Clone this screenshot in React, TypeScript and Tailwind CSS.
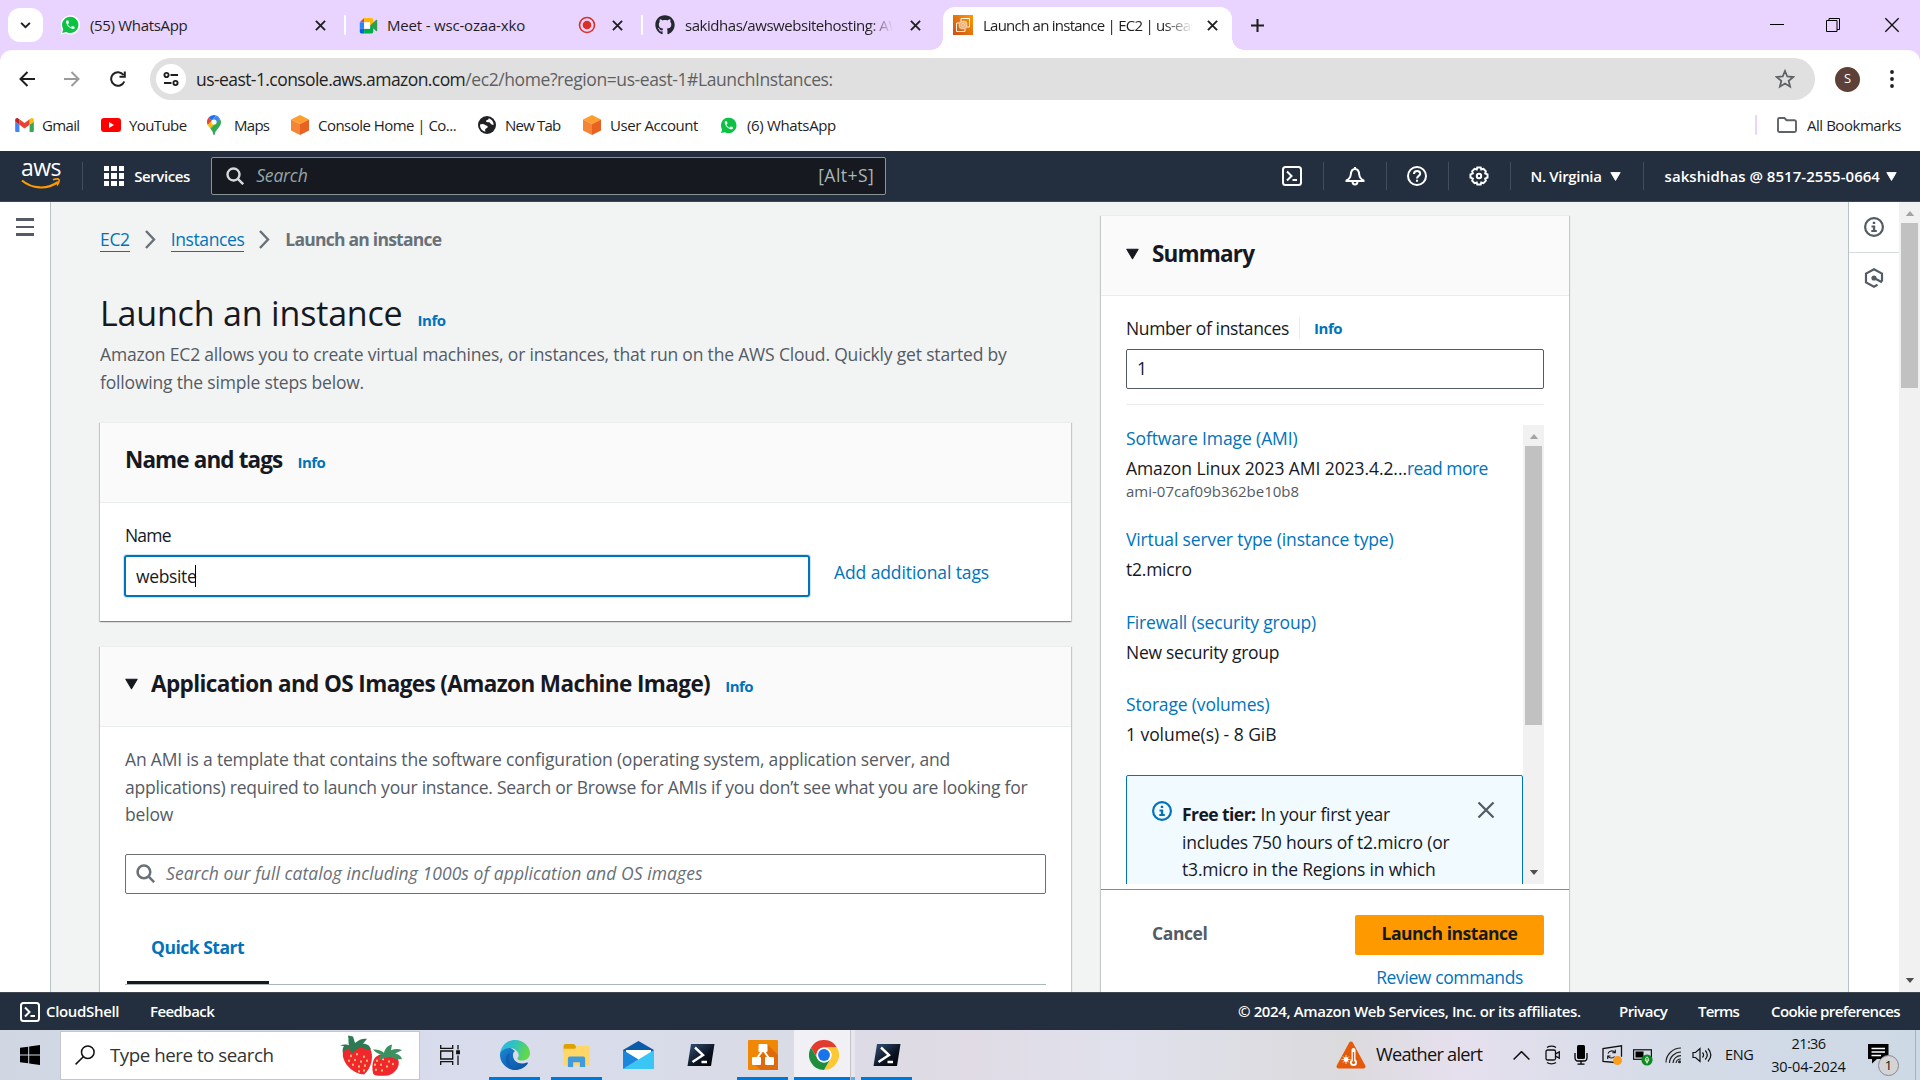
import type { ReactNode } from "react";
import { FaGithub } from "react-icons/fa";

/* ---------- small drawings ---------- */

const PHONE =
  "M6.62 10.79c1.44 2.83 3.76 5.14 6.59 6.59l2.2-2.2c.27-.27.67-.36 1.02-.24 1.12.37 2.33.57 3.57.57.55 0 1 .45 1 1V20c0 .55-.45 1-1 1-9.39 0-17-7.61-17-17 0-.55.45-1 1-1h3.5c.55 0 1 .45 1 1 0 1.25.2 2.45.57 3.57.11.35.03.74-.25 1.02l-2.2 2.2z";

function WhatsApp({ className = "" }: { className?: string }) {
  return (
    <svg viewBox="0 0 24 24" className={className}>
      <path d="M0.6 23.6 2.4 17.6A11.6 11.6 0 1 1 6.8 22Z" fill="#fff" />
      <path d="M2.6 21.6 3.9 17A9.8 9.8 0 1 1 7.4 20.4Z" fill="#0cc143" />
      <g transform="translate(5.6 5) scale(.56)">
        <path d={PHONE} fill="#fff" />
      </g>
    </svg>
  );
}

function MeetLogo({ className = "" }: { className?: string }) {
  return (
    <svg viewBox="0 0 24 24" className={className}>
      <path d="M6.5 2.5V8H1z" fill="#ea4335" />
      <path d="M1 8h5.5v8H1z" fill="#2684fc" />
      <path d="M1 16h5.5v6H3a2 2 0 0 1-2-2z" fill="#0066da" />
      <path d="M6.5 2.5H16a2 2 0 0 1 2 2V12h-4V8H6.5z" fill="#ffba00" />
      <path d="M6.500 16H14v-4h4v8a2 2 0 0 1-2 2H6.500z" fill="#00ac47" />
      <path d="M14 12l7.500-7c.6-.5 1.500-.1 1.500.7v12.600c0 .8-.9 1.200-1.500.7z" fill="#2d9d4e" />
      <path d="M6.500 8H14v8H6.500z" fill="#fff" />
    </svg>
  );
}

function Ec2Logo({ className = "" }: { className?: string }) {
  return (
    <svg viewBox="0 0 20 20" className={className}>
      <defs>
        <linearGradient id="ec2" x1="0" y1="1" x2="1" y2="0">
          <stop offset="0" stopColor="#c8511b" />
          <stop offset="1" stopColor="#f90" />
        </linearGradient>
      </defs>
      <rect width="20" height="20" fill="url(#ec2)" />
      <g fill="none" stroke="#fff" strokeWidth=".9">
        <path d="M8 6V3.500h8.500V12H14M6 8H3.500v8.500H12V14" />
        <rect x="7" y="7" width="6" height="6" />
        <rect x="8.800" y="8.800" width="2.400" height="2.400" />
        <path d="M9 5.500V7M11 5.500V7M9 13v1.500M11 13v1.500M5.500 9H7M5.500 11H7M13 9h1.500M13 11h1.500" strokeWidth=".6" />
      </g>
    </svg>
  );
}

function Cube() {
  return (
    <svg viewBox="0 0 18 20" className="h-5 w-[18px]">
      <path d="M9 0l9 4.500L9 9 0 4.500z" fill="#ff9d2e" />
      <path d="M0 4.500L9 9v11l-9-4.500z" fill="#f58536" />
      <path d="M18 4.500L9 9v11l9-4.500z" fill="#e86222" />
    </svg>
  );
}

function Gmail() {
  return (
    <svg viewBox="0 3 24 18" className="h-[14px] w-[19px]">
      <path fill="#4285f4" d="M1.636 21h3.819v-9.270L0 7.640v11.730C0 20.270.732 21 1.636 21z" />
      <path fill="#34a853" d="M18.545 21h3.819A1.636 1.636 0 0 0 24 19.366V7.640l-5.455 4.090z" />
      <path fill="#fbbc04" d="M18.545 4.640v7.090L24 7.640V5.457c0-2.023-2.309-3.178-3.927-1.964z" />
      <path fill="#ea4335" d="M5.455 11.730V4.640L12 9.548l6.545-4.910v7.091L12 16.640z" />
      <path fill="#c5221f" d="M0 5.457V7.640l5.455 4.090V4.640L3.927 3.493C2.309 2.280 0 3.434 0 5.457z" />
    </svg>
  );
}

function YouTube() {
  return (
    <svg viewBox="0 0 20 14" className="h-[14px] w-5">
      <rect width="20" height="14" rx="3" fill="#f00" />
      <path d="M8 4l5 3-5 3z" fill="#fff" />
    </svg>
  );
}

function MapsPin() {
  return (
    <svg viewBox="0 0 14 20" className="h-5 w-[14px]">
      <path d="M7 0a7 7 0 0 0-5.400 2.500L5 5.400 9.200.400A7 7 0 0 0 7 0z" fill="#1a73e8" />
      <path d="M1.600 2.500A7 7 0 0 0 .7 9.900L5 5.400z" fill="#ea4335" />
      <path d="M9.200.4 5 5.400l4 3.300 4-4.800A7 7 0 0 0 9.200.4z" fill="#4285f4" />
      <path d="M.7 9.900c.6 1.300 1.600 2.400 2.600 3.700L9 8.700 5 5.400z" fill="#fbbc04" />
      <path d="M13 3.900 3.300 13.600C4.900 15.700 6 17 6.200 19.200c.1 1 1.500 1 1.600 0C8.300 14.500 14 12.500 14 7c0-1.100-.4-2.200-1-3.100z" fill="#34a853" />
      <circle cx="7" cy="7" r="2.600" fill="#fff" />
    </svg>
  );
}

function Globe() {
  return (
    <svg viewBox="0 0 18 18" className="h-[18px] w-[18px]">
      <circle cx="9" cy="9" r="9" fill="#202124" />
      <path d="M2 8.500C4 7.500 6 7.800 7.500 9.200c1.500.2 2.500.8 2.200 2-.4 1-2 1-2.500 2-.2.800.2 2 .2 2.600A7.200 7.200 0 0 1 2 8.500zM9.500 2c1 .2 1.500.6 1 1.300S8 4.200 8 5.200s1.600.8 3 1 1.500 1.800 2.600 2.300 1.700.4 2.200.2A7 7 0 0 0 9.500 2z" fill="#fff" />
    </svg>
  );
}

function Cross({ className = "", w = 2 }: { className?: string; w?: number }) {
  return (
    <svg viewBox="0 0 12 12" className={className} fill="none" stroke="currentColor" strokeWidth={w}>
      <path d="M1 1l10 10M11 1L1 11" />
    </svg>
  );
}

function Down({ className = "" }: { className?: string }) {
  return (
    <svg viewBox="0 0 12 10" className={className}>
      <path d="M.8.6h10.400L6 9.400z" fill="currentColor" stroke="currentColor" strokeLinejoin="round" />
    </svg>
  );
}

function Magnifier({ className = "" }: { className?: string }) {
  return (
    <svg viewBox="0 0 18 18" className={className} fill="none" stroke="currentColor" strokeWidth="2.400">
      <circle cx="7.500" cy="7.500" r="6" />
      <path d="M11.800 11.800l5.400 5.400" />
    </svg>
  );
}

function Shell() {
  return (
    <svg viewBox="0 0 20 20" className="h-5 w-5 shrink-0" fill="none" stroke="#fff" strokeWidth="2">
      <rect x="1" y="1" width="18" height="18" rx="2.500" />
      <path d="M5 5.500 9.500 10 5 14.500M10.500 14H15" />
    </svg>
  );
}

function InfoCircle({ className = "" }: { className?: string }) {
  return (
    <svg viewBox="0 0 20 20" className={className}>
      <circle cx="10" cy="10" r="8.900" fill="none" stroke="currentColor" strokeWidth="2.200" />
      <path d="M8.800 4.700h2.400v2.400H8.800zM7.500 8.600h3.700v4.400h1.600v2H7.300v-2h1.600v-2.400H7.500z" fill="currentColor" />
    </svg>
  );
}

function ScrollArrow({ up = false }: { up?: boolean }) {
  return (
    <svg viewBox="0 0 10 6" className="h-[5px] w-[10px]">
      <path d={up ? "M0 6l5-6 5 6z" : "M0 0h10L5 6z"} fill={up ? "#a3a3a3" : "#505050"} />
    </svg>
  );
}

function PowerShell() {
  return (
    <svg viewBox="0 0 28 22" className="h-[22px] w-7">
      <defs>
        <linearGradient id="ps" x1="0" y1="0" x2="1" y2="1">
          <stop offset="0" stopColor="#34527a" />
          <stop offset=".6" stopColor="#0b1220" />
          <stop offset="1" stopColor="#000" />
        </linearGradient>
      </defs>
      <path d="M4 0h23.500L24 22H.5z" fill="url(#ps)" />
      <path d="M8 3.500l8 7.500-10.500 7M14.500 18h5.500" fill="none" stroke="#fff" strokeWidth="2.400" />
    </svg>
  );
}

function Strawberries() {
  const seeds = [[12, 27], [18, 25], [25, 28], [10, 33], [16, 32], [22, 34], [28, 33], [14, 38], [20, 40], [26, 39], [20, 46], [25, 45]];
  const seeds2 = [[38, 33], [44, 31], [50, 34], [36, 38], [42, 38], [48, 40], [37, 44], [43, 45], [54, 37]];
  return (
    <svg viewBox="0 0 64 53" preserveAspectRatio="none" className="h-[43px] w-[64px] shrink-0">
      <path d="M4 22C8 13 27 10 31 18c4 8 2 24-6 32C15 50 2 36 4 22z" fill="#f0282d" />
      <path d="M35 31c4-9 20-9 24 0 3 8-3 18-10 20-7 1-15 1-15-3-1-5-1-12 1-17z" fill="#f0282d" />
      <g fill="#ffd277">
        {seeds.map(([x, y]) => <ellipse key={x + "-" + y} cx={x} cy={y} rx=".9" ry="1.600" />)}
        {seeds2.map(([x, y]) => <ellipse key={x + "-" + y} cx={x} cy={y} rx=".9" ry="1.500" />)}
      </g>
      <path d="M1 14c5-2 8-1 9 0-1-3 0-7-1-12l5 1 2 8c4-4 8-6 12-5l-4 6c5 0 7 3 8 7-5 0-8-1-10-3-3 2-7 4-9 8-2-3-3-5-2-7-4 2-6 4-7 7-1-5 0-8 1-9z" fill="#2c7a53" />
      <path d="M34 19c6 0 9 2 11 4 1-5 4-9 8-10l-1 7c4-2 8-2 11 0l-7 4c4 1 6 3 7 7-5 1-9-1-11-3-3 1-8 1-12 5 0-4 1-6 3-7-4-2-7-4-9-7z" fill="#3b9160" />
    </svg>
  );
}

function Edge() {
  return (
    <svg viewBox="0 0 30 30" className="h-[30px] w-[30px]">
      <defs>
        <linearGradient id="e1" x1="0" y1="0" x2="1" y2=".3">
          <stop offset="0" stopColor="#2db4ea" />
          <stop offset=".5" stopColor="#2fc2c0" />
          <stop offset="1" stopColor="#62d84a" />
        </linearGradient>
        <linearGradient id="e2" x1="0" y1="0" x2="1" y2="1">
          <stop offset="0" stopColor="#1b86d8" />
          <stop offset="1" stopColor="#0c4f9c" />
        </linearGradient>
      </defs>
      <path d="M0 15C0 23 7 30 15 30c5.500 0 10-2.500 12.800-6.500.5-.8-.2-1.300-.9-1-7 3-14-1-14-7.500 0-2 1-3.200 2-4L8 6C3 8 0 11 0 15z" fill="url(#e2)" />
      <path d="M10.500 14c-2.500 4-1.500 11 4.500 16C7 29.500 5 22 6 17c.8-3 2.500-3.500 4.500-3z" fill="#0f5fb5" />
      <path d="M0 14C1 6 7 0 15 0c9 0 15 7 15 13 0 5-4 7.500-8 7.500-3 0-5-1-4.500-2.500 1-1 1.500-2 1-4C18 11 14 8 10 8 5 8 1 11 0 14z" fill="url(#e1)" />
    </svg>
  );
}

function Explorer() {
  return (
    <svg viewBox="0 0 28 24" className="h-[23px] w-7">
      <path d="M0 2a2 2 0 0 1 2-2h9l2.500 3V8H0z" fill="#e0a100" />
      <path d="M0 5h12l2-3h13v20.500H0z" fill="#ffd766" />
      <path d="M4.500 24v-9a2 2 0 0 1 2-2h14a2 2 0 0 1 2 2v9H17v-5h-7v5z" fill="#3f9ae0" />
    </svg>
  );
}

function Mail() {
  return (
    <svg viewBox="0 0 31 28" className="h-7 w-[31px]">
      <path d="M0 9 15.500 0 31 9v6H0z" fill="#0a5ba8" />
      <path d="M3 9h25v8l-12.500 6L3 17z" fill="#fff" />
      <path d="M31 9v19H0z" fill="#3ac6f5" />
      <path d="M0 9l15.500 9.500L0 28z" fill="#1a86dc" />
    </svg>
  );
}

function DrawIo() {
  return (
    <svg viewBox="0 0 30 30" className="h-[30px] w-[30px]">
      <rect width="30" height="30" rx="1" fill="#f08705" />
      <path d="M19 4 30 15v15H13l-8-7 10-10z" fill="#df6c0c" />
      <path d="M14 11 8.500 19M16 11l5.500 8" stroke="#fff" strokeWidth="2" />
      <g fill="#fff">
        <rect x="10.500" y="4" width="9" height="8" rx="1" />
        <rect x="4" y="17" width="9" height="8" rx="1" />
        <rect x="17" y="17" width="9" height="8" rx="1" />
      </g>
    </svg>
  );
}

function Chrome() {
  return (
    <svg viewBox="0 0 48 48" className="h-[30px] w-[30px]">
      <circle cx="24" cy="24" r="24" fill="#fff" />
      <path d="M3.200 12A24 24 0 0 1 44.800 12H24a12 12 0 0 0-10.400 18z" fill="#e33b2e" />
      <path d="M44.800 12A24 24 0 0 1 24 48l10.400-18A12 12 0 0 0 24 12z" fill="#fcc934" />
      <path d="M24 48A24 24 0 0 1 3.200 12l10.400 18a12 12 0 0 0 20.800 0z" fill="#1e8e3e" />
      <circle cx="24" cy="24" r="12" fill="#fff" />
      <circle cx="24" cy="24" r="9.500" fill="#1a73e8" />
    </svg>
  );
}

/* ---------- browser window ---------- */

function Divider({ className = "" }: { className?: string }) {
  return <div className={"h-5 w-[2px] shrink-0 rounded bg-white " + className} />;
}

function TabStrip() {
  return (
    <div className="flex h-[50px] items-center bg-[#e9d3ff] text-[15px] text-[#1f1f1f]">
      <div className="ml-2 flex h-[34px] w-[35px] shrink-0 items-center justify-center rounded-xl bg-white">
        <svg viewBox="0 0 12 8" className="h-[7px] w-[11px]" fill="none" stroke="#1f1f1f" strokeWidth="2.200">
          <path d="M1 1l5 5 5-5" />
        </svg>
      </div>
      <div className="ml-[9px] flex w-[292px] shrink-0 items-center pl-2">
        <WhatsApp className="h-5 w-5" />
        <span className="ml-[10px] w-[216px] tracking-[-0.32px]">(55) WhatsApp</span>
        <Cross className="ml-[9px] h-[11px] w-[11px]" />
      </div>
      <Divider />
      <div className="flex w-[295px] shrink-0 items-center pl-[13px]">
        <MeetLogo className="h-[19px] w-[19px]" />
        <span className="ml-[9px] w-[181px] tracking-[-0.18px]">Meet - wsc-ozaa-xko</span>
        <svg viewBox="0 0 18 18" className="ml-[10px] h-[18px] w-[18px]">
          <circle cx="9" cy="9" r="7.500" fill="none" stroke="#d93025" strokeWidth="1.600" />
          <circle cx="9" cy="9" r="4.300" fill="#d93025" />
        </svg>
        <Cross className="ml-[16px] h-[11px] w-[11px]" />
      </div>
      <Divider />
      <div className="flex w-[300px] shrink-0 items-center pl-3">
        <FaGithub className="h-5 w-5 text-[#24292f]" />
        <span className="ml-[10px] w-[208px] overflow-hidden whitespace-nowrap tracking-[-0.46px] [mask-image:linear-gradient(to_right,#000_88%,transparent)]">
          sakidhas/awswebsitehosting: AW
        </span>
        <Cross className="ml-[17px] h-[11px] w-[11px]" />
      </div>
      <div className="relative mt-[7px] flex h-[43px] w-[289px] shrink-0 items-center rounded-t-xl bg-white pb-[7px] pl-[10px]">
        <Ec2Logo className="h-5 w-5" />
        <span className="ml-[10px] w-[210px] overflow-hidden whitespace-nowrap tracking-[-0.75px] [mask-image:linear-gradient(to_right,#000_86%,transparent)]">
          Launch an instance | EC2 | us-east
        </span>
        <Cross className="ml-[14px] h-[11px] w-[11px]" />
        <div className="absolute -left-3 bottom-0 h-3 w-3 bg-[radial-gradient(circle_at_0_0,#e9d3ff_11.500px,#fff_12px)]" />
        <div className="absolute -right-3 bottom-0 h-3 w-3 bg-[radial-gradient(circle_at_100%_0,#e9d3ff_11.500px,#fff_12px)]" />
      </div>
      <svg viewBox="0 0 14 14" className="ml-[19px] h-[13px] w-[13px]" stroke="#1f1f1f" strokeWidth="2.200">
        <path d="M7 0v14M0 7h14" />
      </svg>
      <svg viewBox="0 0 14 14" className="ml-auto mr-[42px] h-[14px] w-[14px]" stroke="#000">
        <path d="M0 6.500h14" />
      </svg>
      <svg viewBox="0 0 14 14" className="mr-[44px] h-[14px] w-[14px]" fill="none" stroke="#000">
        <path d="M.5 2.500h10.500v11H.5zM3 2.500v-2h10.500v11H11" />
      </svg>
      <Cross w={1} className="mr-[20px] h-[16px] w-[16px] text-[#111]" />
    </div>
  );
}

function Toolbar() {
  return (
    <div className="bg-[#e9d3ff]">
      <div className="flex h-[58px] items-center rounded-t-xl bg-white">
        <svg viewBox="0 0 16 16" className="ml-[19px] h-4 w-4" fill="none" stroke="#1f1f1f" strokeWidth="2">
          <path d="M8.500 1 1.500 8l7 7M2 8h14" />
        </svg>
        <svg viewBox="0 0 16 16" className="ml-[29px] h-4 w-4" fill="none" stroke="#9b9b9b" strokeWidth="2">
          <path d="M7.500 1l7 7-7 7M14 8H0" />
        </svg>
        <svg viewBox="0 0 16 16" className="ml-[30px] h-4 w-4" fill="none" stroke="#1f1f1f" strokeWidth="2">
          <path d="M14.300 10.500A6.800 6.800 0 1 1 13.500 4M14.800.5v5.300H9.500" />
        </svg>
        <div className="ml-[24px] flex h-[42px] w-[1665px] items-center rounded-full bg-[#e0e0e0] pl-[6px] text-[17.5px]">
          <div className="flex h-[30px] w-[30px] items-center justify-center rounded-full bg-white">
            <svg viewBox="0 0 16 16" className="h-4 w-4" fill="none" stroke="#1f1f1f" strokeWidth="1.900">
              <circle cx="3.500" cy="4" r="2.100" />
              <path d="M7.500 4H15M1 12h7.500" />
              <circle cx="12.500" cy="12" r="2.100" />
            </svg>
          </div>
          <span className="ml-[10px] tracking-[-0.57px] text-[#1f1f1f]">us-east-1.console.aws.amazon.com</span>
          <span className="tracking-[-0.41px] text-[#5f6062]">/ec2/home?region=us-east-1#LaunchInstances:</span>
          <svg viewBox="0 0 20 20" className="ml-auto mr-5 h-5 w-5" fill="none" stroke="#5f6368" strokeWidth="1.800">
            <path d="M10 2l2.300 5.500 6 .5-4.600 3.900 1.400 5.800L10 14.600l-5.100 3.100 1.400-5.800L1.700 8l6-.5z" />
          </svg>
        </div>
        <div className="ml-5 flex h-[25px] w-[25px] items-center justify-center rounded-full bg-[#5d4037] text-[13px] text-white">S</div>
        <svg viewBox="0 0 4 18" className="ml-[30px] h-[18px] w-1" fill="#1f1f1f">
          <circle cx="2" cy="2" r="1.900" />
          <circle cx="2" cy="9" r="1.900" />
          <circle cx="2" cy="16" r="1.900" />
        </svg>
      </div>
      <div className="flex h-[43px] items-start bg-white text-[15px] leading-[34px] text-[#1f1f1f]">
        <Mark className="ml-[15px] w-[86px]" icon={<Gmail />}><span className="tracking-[-0.64px]">Gmail</span></Mark>
        <Mark className="w-[106px]" icon={<YouTube />} wide><span className="tracking-[-0.6px]">YouTube</span></Mark>
        <Mark className="w-[84px]" icon={<MapsPin />}><span className="tracking-[-0.72px]">Maps</span></Mark>
        <Mark className="w-[187px]" icon={<Cube />}><span className="tracking-[-0.53px]">Console Home | Co...</span></Mark>
        <Mark className="w-[105px]" icon={<Globe />}><span className="tracking-[-0.79px]">New Tab</span></Mark>
        <Mark className="w-[137px]" icon={<Cube />}><span className="tracking-[-0.43px]">User Account</span></Mark>
        <Mark className="w-[130px]" icon={<WhatsApp className="-ml-px h-[19px] w-[19px]" />}><span className="tracking-[-0.34px]">(6) WhatsApp</span></Mark>
        <div className="ml-auto mt-[7px] h-5 w-[2px] rounded bg-[#e9d3ff]" />
        <svg viewBox="0 0 20 16" className="ml-[20px] mt-[9px] h-4 w-5" fill="none" stroke="#5f6368" strokeWidth="1.900">
          <path d="M1 2.500A1.500 1.500 0 0 1 2.500 1H7.500l2 2.200h8A1.500 1.500 0 0 1 19 4.700v8.800a1.500 1.500 0 0 1-1.500 1.500h-15A1.500 1.500 0 0 1 1 13.500z" />
        </svg>
        <span className="ml-[10px] mr-[19px] tracking-[-0.46px]">All Bookmarks</span>
      </div>
    </div>
  );
}

function Mark({ icon, children, className, wide = false }: { icon: ReactNode; children: ReactNode; className: string; wide?: boolean }) {
  return (
    <div className={"flex h-[34px] shrink-0 items-center whitespace-nowrap " + className}>
      <div className={wide ? "mr-[10px] w-[18px]" : "mr-[9px] w-[18px]"}>{icon}</div>
      {children}
    </div>
  );
}

/* ---------- AWS console ---------- */

function NavDivider() {
  return <div className="h-7 w-px shrink-0 bg-[#414d5c]" />;
}

function AwsHeader() {
  return (
    <div className="flex h-[51px] items-center border-b border-[#414750] bg-[#232f3e] text-[15px] font-semibold text-white">
      <div className="ml-[21px] flex w-[40px] flex-col items-center">
        <span className="mt-[-5px] text-[23px] font-medium leading-[20px] tracking-[-0.6px]">aws</span>
        <svg viewBox="0 0 40 12" className="mt-[1px] h-[12px] w-10" fill="none" stroke="#f90" strokeWidth="2.200">
          <path d="M1 2.500C11 11 26 12 37 4" />
          <path d="M32 1.800c3-1 5.500-1 6 0s-.5 3.500-2 5.700" strokeWidth="1.700" />
        </svg>
      </div>
      <div className="ml-[21px]"><NavDivider /></div>
      <div className="ml-[21px] grid grid-cols-3 gap-[2px]">
        {[0, 1, 2, 3, 4, 5, 6, 7, 8].map((i) => (
          <div key={i} className="h-[5.4px] w-[5.4px] bg-white" />
        ))}
      </div>
      <span className="ml-[10px] w-[77px] tracking-[-0.4px]">Services</span>
      <div className="-mt-px flex h-[38px] w-[675px] items-center rounded-[2px] border border-[#879596] bg-[#16191f] pl-[14px] pr-[11px] text-[17.5px] font-normal text-[#95a5a6]">
        <Magnifier className="h-[18px] w-[18px] text-[#d5dbdb]" />
        <span className="ml-[12px] italic tracking-[-0.16px]">Search</span>
        <span className="ml-auto tracking-[0.46px] text-[#aab7b8]">[Alt+S]</span>
      </div>
      <div className="ml-auto flex w-[62px] justify-center"><Shell /></div>
      <NavDivider />
      <div className="flex w-[62px] justify-center">
        <svg viewBox="0 0 20 20" className="h-5 w-5" fill="none" stroke="#fff" strokeWidth="2">
          <path d="M10 1v2M10 3C6.800 3 6 6 5.800 8.500 5.500 11 3.500 13.500 1.500 14.500v.5h17v-.5c-2-1-4-3.500-4.300-6C14 6 13.200 3 10 3zM7.500 15.500a2.500 3 0 0 0 5 0" />
        </svg>
      </div>
      <NavDivider />
      <div className="flex w-[61px] justify-center">
        <svg viewBox="0 0 20 20" className="h-5 w-5" fill="none" stroke="#fff" strokeWidth="2">
          <circle cx="10" cy="10" r="9" />
          <path d="M7 8c0-4 6.200-3.700 6.200-.3 0 2.200-3.200 2.200-3.200 4.800M10 13.800v2" />
        </svg>
      </div>
      <NavDivider />
      <div className="flex w-[61px] justify-center">
        <svg viewBox="0 0 20 20" className="h-5 w-5" fill="none" stroke="#fff" strokeWidth="2">
          <path d="M8.300 1.500h3.400l.6 2 2.200-.6 2.300 2.300-.6 2.200 2.300 1v3.200l-2.300 1 .6 2.200-2.300 2.300-2.200-.6-.6 2H8.300l-.6-2-2.200.6-2.300-2.300.6-2.200-2.300-1V8.400l2.300-1-.6-2.200 2.300-2.300 2.200.6z" />
          <circle cx="10" cy="10" r="2.200" />
        </svg>
      </div>
      <NavDivider />
      <span className="ml-[20px] tracking-[-0.33px]">N. Virginia</span>
      <Down className="ml-[8px] h-[9px] w-[11px]" />
      <div className="ml-[22px]"><NavDivider /></div>
      <span className="ml-[21px] tracking-[0.04px]">sakshidhas @ 8517-2555-0664</span>
      <Down className="ml-[6px] mr-[23px] h-[9px] w-[11px]" />
    </div>
  );
}

const cardClass =
  "bg-white shadow-[0_1px_1px_rgba(0,28,36,0.3),1px_1px_1px_rgba(0,28,36,0.15),-1px_1px_1px_rgba(0,28,36,0.15)] border-t border-[#eaeded]";

function Info({ className = "" }: { className?: string }) {
  return <span className={"text-[15px] font-bold tracking-[-0.48px] text-[#0073bb] " + className}>Info</span>;
}

function Chevron() {
  return (
    <svg viewBox="0 0 12 19" className="ml-[14px] mr-[15px] h-[19px] w-3" fill="none" stroke="#687078" strokeWidth="2.400">
      <path d="M2 1l8 8.500-8 8.500" />
    </svg>
  );
}

function LeftColumn() {
  return (
    <div className="ml-[49px] w-[971px] shrink-0">
      <div className="mt-[23px] flex h-[28px] items-center text-[17.5px] leading-[24px]">
        <span className="border-b border-[#0073bb] tracking-[-0.32px] text-[#0073bb]">EC2</span>
        <Chevron />
        <span className="border-b border-[#0073bb] tracking-[-0.41px] text-[#0073bb]">Instances</span>
        <Chevron />
        <span className="font-bold tracking-[-0.76px] text-[#687078]">Launch an instance</span>
      </div>
      <div className="mt-[38px] flex items-baseline">
        <h1 className="text-[34px] leading-[45px] tracking-[-0.18px] text-[#16191f]">Launch an instance</h1>
        <Info className="ml-[15px]" />
      </div>
      <p className="mt-[5px] whitespace-nowrap text-[17.5px] leading-[27.5px] tracking-[-0.18px] text-[#545b64]">
        Amazon EC2 allows you to create virtual machines, or instances, that run on the AWS Cloud. Quickly get started by
        <br />
        following the simple steps below.
      </p>

      <div className={"mt-[26px] h-[199px] " + cardClass}>
        <div className="flex h-[80px] items-baseline border-b border-[#eaeded] bg-[#fafafa] pl-[25px] pt-[20px]">
          <h2 className="text-[22.5px] font-bold leading-[34px] tracking-[-0.88px] text-[#16191f]">Name and tags</h2>
          <Info className="ml-[15px]" />
        </div>
        <div className="pl-[25px] pt-[18px] text-[17.5px] leading-[28px]">
          <div className="tracking-[-0.81px] text-[#16191f]">Name</div>
          <div className="mt-[6px] flex items-center">
            <div className="-ml-px flex h-[42px] w-[686px] items-center rounded-[3px] border-2 border-[#0073bb] pb-px pl-[10px] shadow-[0_0_0_1px_#cfe6f5]">
              <span className="tracking-[-0.35px] text-[#16191f]">website</span>
              <span className="-ml-px h-[22px] w-px bg-black" />
            </div>
            <span className="-mt-[9px] ml-[24px] tracking-[-0.1px] text-[#0073bb]">Add additional tags</span>
          </div>
        </div>
      </div>

      <div className={"mt-[25px] h-[400px] " + cardClass}>
        <div className="flex h-[80px] items-baseline border-b border-[#eaeded] bg-[#fafafa] pl-[25px] pt-[20px] text-[#16191f]">
          <Down className="h-[12px] w-[13px] -translate-y-[2px]" />
          <h2 className="ml-[13px] text-[22.5px] font-bold leading-[34px] tracking-[-0.6px]">
            Application and OS Images (Amazon Machine Image)
          </h2>
          <Info className="ml-[15px]" />
        </div>
        <div className="pl-[25px] pr-[25px] pt-[19px] text-[17.5px]">
          <div className="whitespace-nowrap leading-[27.5px] tracking-[-0.19px] text-[#545b64]">
            <div>An AMI is a template that contains the software configuration (operating system, application server, and</div>
            <div className="tracking-[-0.23px]">
              applications) required to launch your instance. Search or Browse for AMIs if you don’t see what you are looking for
            </div>
            <div>below</div>
          </div>
          <div className="mt-[25px] flex h-[40px] items-center rounded-[2px] border border-[#687078] pl-[10px] text-[#687078]">
            <Magnifier className="h-[19px] w-[19px]" />
            <span className="ml-[11px] italic tracking-[0.08px]">Search our full catalog including 1000s of application and OS images</span>
          </div>
          <div className="flex h-[91px] flex-col border-b border-[#aab7b8]">
            <span className="mt-[40px] pl-[26px] font-bold leading-[27px] tracking-[-0.5px] text-[#0073bb]">Quick Start</span>
            <div className="ml-[2px] mt-auto h-[3px] w-[142px] bg-[#16191f]" />
          </div>
        </div>
      </div>
    </div>
  );
}

function SummaryCard() {
  return (
    <div className={"ml-[30px] mt-[13px] w-[468px] shrink-0 text-[17.5px] text-[#16191f] " + cardClass}>
      <div className="flex h-[80px] items-baseline border-b border-[#eaeded] bg-[#fafafa] pl-[25px] pt-[21px]">
        <Down className="h-[12px] w-[13px] -translate-y-[2px]" />
        <h2 className="ml-[13px] text-[22.5px] font-bold leading-[34px] tracking-[-0.82px]">Summary</h2>
      </div>
      <div className="px-[25px]">
        <div className="mt-[21px] flex h-[22px] items-center">
          <span className="tracking-[-0.37px]">Number of instances</span>
          <span className="ml-[10px] h-[22px] w-px bg-[#eaeded]" />
          <Info className="ml-[14px] pt-px" />
        </div>
        <div className="mt-[10px] flex h-[40px] items-center rounded-[2px] border border-[#545b64] pb-px pl-[10px]">1</div>
        <div className="mt-[15px] h-px bg-[#eaeded]" />
        <div className="mt-[20px] flex h-[459px] overflow-hidden">
          <div className="w-[397px] shrink-0 leading-[28px]">
            <div className="-mt-[1px] tracking-[-0.11px] text-[#0073bb]">Software Image (AMI)</div>
            <div className="mt-[2px] whitespace-nowrap">
              <span className="tracking-[-0.08px]">Amazon Linux 2023 AMI 2023.4.2...</span>
              <span className="tracking-[-0.52px] text-[#0073bb]">read more</span>
            </div>
            <div className="-mt-px text-[15px] leading-[20px] text-[#545b64]">ami-07caf09b362be10b8</div>
            <div className="mt-[24px] tracking-[-0.13px] text-[#0073bb]">Virtual server type (instance type)</div>
            <div className="mt-[2px] tracking-[-0.23px]">t2.micro</div>
            <div className="mt-[25px] tracking-[-0.18px] text-[#0073bb]">Firewall (security group)</div>
            <div className="mt-[2px] tracking-[-0.27px]">New security group</div>
            <div className="mt-[24px] tracking-[-0.16px] text-[#0073bb]">Storage (volumes)</div>
            <div className="mt-[2px] tracking-[-0.05px]">1 volume(s) - 8 GiB</div>
            <div className="mt-[27px] flex h-[140px] rounded-[2px] border border-[#0073bb] bg-[#f1faff] pl-[25px] pt-[25px]">
              <InfoCircle className="h-5 w-5 text-[#0073bb]" />
              <div className="ml-[10px] w-[280px] whitespace-nowrap leading-[27.5px]">
                <span className="font-bold tracking-[-0.55px]">Free tier:</span>
                <span className="ml-[5px] tracking-[-0.25px]">In your first year</span>
                <div className="tracking-[-0.21px]">includes 750 hours of t2.micro (or</div>
                <div className="tracking-[-0.18px]">t3.micro in the Regions in which</div>
              </div>
              <Cross w={1.5} className="ml-[15px] h-[18px] w-[18px] text-[#545b64]" />
            </div>
          </div>
          <div className="flex w-[21px] flex-col items-center bg-[#f1f1f1] pb-[9px]">
            <div className="flex h-[21px] items-center pt-[2px]"><ScrollArrow up /></div>
            <div className="h-[279px] w-[17px] bg-[#c1c1c1]" />
            <div className="mt-auto flex"><ScrollArrow /></div>
          </div>
        </div>
      </div>
      <div className="mt-[5px] flex h-[130px] flex-col border-t border-[#7f8a92] pl-[51px] pr-[25px] pt-[25px]">
        <div className="flex h-[40px] items-center justify-between">
          <span className="pb-[3px] font-bold tracking-[-0.4px] text-[#545b64]">Cancel</span>
          <span className="flex h-[40px] w-[189px] items-center justify-center rounded-[2px] bg-[#f90] pb-[3px] font-bold tracking-[-0.47px]">Launch instance</span>
        </div>
        <span className="mr-[21px] mt-[8px] self-end leading-[28px] tracking-[-0.38px] text-[#0073bb]">Review commands</span>
      </div>
    </div>
  );
}

function Console() {
  return (
    <div className="flex h-[790px] overflow-hidden bg-[#f2f3f3]">
      <div className="w-[51px] shrink-0 border-r border-[#b9c3c4] bg-white pl-4 pt-[16px]">
        <div className="flex w-[18px] flex-col gap-[5px]">
          <div className="h-[2.500px] bg-[#545b64]" />
          <div className="h-[2.500px] bg-[#545b64]" />
          <div className="h-[2.500px] bg-[#545b64]" />
        </div>
      </div>
      <LeftColumn />
      <SummaryCard />
      <div className="ml-auto w-[51px] shrink-0 border-l border-[#b9c3c4] bg-white text-[#545b64]">
        <div className="flex h-[51px] items-center justify-center border-b border-[#d5dbdb]">
          <InfoCircle className="h-5 w-5" />
        </div>
        <div className="flex h-[50px] items-center justify-center">
          <svg viewBox="0 0 20 20" className="h-5 w-5" fill="none" stroke="currentColor" strokeWidth="2.200">
            <path d="M18 13.500V5.600L10 1.300 2 5.600v8.800l8 4.300 3.500-1.900M10 10l8 4.300" />
            <circle cx="10" cy="10" r="2.600" fill="currentColor" stroke="none" />
          </svg>
        </div>
      </div>
      <div className="flex w-[21px] shrink-0 flex-col items-center bg-[#f1f1f1] pb-[9px]">
        <div className="flex h-[21px] items-center pt-[2px]"><ScrollArrow up /></div>
        <div className="h-[165px] w-[17px] bg-[#c1c1c1]" />
        <div className="mt-auto"><ScrollArrow /></div>
      </div>
    </div>
  );
}

function AwsFooter() {
  return (
    <div className="flex h-[38px] items-center whitespace-nowrap border-t border-[#414750] bg-[#232f3e] text-[15px] font-semibold text-white">
      <div className="ml-5 flex"><Shell /></div>
      <span className="ml-[6px] w-[104px] tracking-[-0.33px]">CloudShell</span>
      <span className="tracking-[-0.56px]">Feedback</span>
      <span className="ml-auto w-[381px] tracking-[-0.36px]">© 2024, Amazon Web Services, Inc. or its affiliates.</span>
      <span className="w-[79px] tracking-[-0.54px]">Privacy</span>
      <span className="w-[73px] tracking-[-0.84px]">Terms</span>
      <span className="w-[149px] tracking-[-0.59px]">Cookie preferences</span>
    </div>
  );
}

/* ---------- Windows taskbar ---------- */

function TaskButton({ className, children, open = false }: { className: string; children: ReactNode; open?: boolean }) {
  return (
    <div className={"flex h-[50px] shrink-0 flex-col items-center justify-between " + className}>
      <div className="flex h-[47px] items-center pt-[3px]">{children}</div>
      {open ? <div className="h-[3px] w-full bg-[#0078d7]" /> : null}
    </div>
  );
}

function Taskbar() {
  return (
    <div className="flex h-[50px] items-center overflow-hidden bg-[linear-gradient(90deg,#d0d7e3_0%,#d8dcec_25%,#d9dbe6_40%,#e0dbe5_50%,#e0e1ec_58%,#dbdadd_70%,#e6e0ee_76%,#d3dbe7_88%,#cdd9e5_100%)] text-[15px] text-[#111]">
      <svg viewBox="0 0 20 20" className="ml-5 h-5 w-5" fill="#000">
        <path d="M0 2.800 8.200 1.700v7.900H0zM9.200 1.500 20 0v9.600H9.200zM0 10.500h8.200v7.800L0 17.200zM9.200 10.500H20V20L9.200 18.500z" />
      </svg>
      <div className="ml-[20px] flex h-[49px] w-[360px] shrink-0 items-center border border-[#c4c6cc] bg-white pl-[14px]">
        <svg viewBox="0 0 20 20" className="h-5 w-5" fill="none" stroke="#111" strokeWidth="1.500">
          <circle cx="12.800" cy="7.200" r="6.300" />
          <path d="M8.300 11.700.6 19.400" />
        </svg>
        <span className="ml-[15px] w-[229px] text-[18.75px] tracking-[-0.48px] text-[#333]">Type here to search</span>
        <Strawberries />
      </div>
      <svg viewBox="0 0 20 20" className="ml-[20px] h-5 w-5 shrink-0" fill="none" stroke="#111" strokeWidth="1.300">
        <path d="M.7 0v3.300h12V0M.7 20v-3.300h12V20M.7 6h12v8H.7zM18 0v4.500M18 10.500V20" />
        <path d="M16.800 6h2.500v2.500h-2.500z" fill="#111" />
      </svg>
      <TaskButton open className="ml-[29px] w-[51px]"><Edge /></TaskButton>
      <TaskButton open className="ml-[11px] w-[51px]"><Explorer /></TaskButton>
      <TaskButton className="ml-[11px] w-[51px]"><Mail /></TaskButton>
      <TaskButton className="ml-[11px] w-[51px]"><PowerShell /></TaskButton>
      <TaskButton open className="ml-[11px] w-[51px]"><DrawIo /></TaskButton>
      <TaskButton open className="ml-[6px] w-[57px] border-r border-[#c3c3cb] bg-[#f1f1f5]"><span className="pl-[4px]"><Chrome /></span></TaskButton>
      <div className="flex h-[50px] w-[4px] items-end bg-[#e8e6ee]"><div className="h-[3px] w-full bg-[#63a9e4]" /></div>
      <TaskButton open className="ml-[6px] w-[51px]"><PowerShell /></TaskButton>

      <svg viewBox="0 0 30 28" className="ml-auto h-7 w-[30px]">
        <path d="M15 2.500 27.500 25.500h-25z" fill="#e5590a" stroke="#e5590a" strokeWidth="4" strokeLinejoin="round" />
        <path d="M17.500 9v9" stroke="#fff" strokeWidth="4" strokeLinecap="round" />
        <circle cx="17.500" cy="21.500" r="3.500" fill="#fff" />
        <path d="M17.500 11v10" stroke="#e5590a" strokeWidth="1.400" />
        <circle cx="17.500" cy="21.500" r="1.600" fill="#e5590a" />
        <circle cx="10" cy="18.500" r="2.400" fill="#fff" />
        <path d="M10 14v9M5.500 18.500h9M7 15.500l6 6M13 15.500l-6 6" stroke="#fff" strokeWidth=".8" />
      </svg>
      <span className="ml-[10px] w-[137px] text-[18.2px] tracking-[-0.75px]">Weather alert</span>
      <svg viewBox="0 0 17 9" className="h-[9px] w-[17px]" fill="none" stroke="#111" strokeWidth="1.500"><path d="M.6 8.500l7.900-7.900 7.900 7.900" /></svg>
      <svg viewBox="0 0 16 20" className="ml-[15px] h-5 w-4" fill="none" stroke="#111" strokeWidth="1.300">
        <rect x="1" y="5" width="9.500" height="10" rx="1.500" />
        <path d="M10.500 8.800l3.800-2v6.400l-3.800-2M2 2.500C4.500.800 8.500.800 11 2.500M2 17.500c2.500 1.700 6.500 1.700 9 0" />
      </svg>
      <svg viewBox="0 0 14 20" className="ml-[13px] h-5 w-[14px]">
        <rect x="3" y="0" width="8" height="14" rx="1.500" fill="#000" />
        <path d="M1 8v4.500Q1 16 4 16h6q3 0 3-3.500V8M7 16v3M3.500 19.200h7" fill="none" stroke="#000" strokeWidth="1.300" />
      </svg>
      <svg viewBox="0 0 21 20" className="ml-[14px] h-5 w-[21px]" fill="none" stroke="#111" strokeWidth="1.300">
        <path d="M13 17.500 1 16.500V3.500L19.500.8v11" />
        <path d="M6 8.500c1-3 5-3.500 7-1M13.300 4.800v3h-3M12.500 11.500c-1.500 2-5 2-6.300 0M5.700 14v-3h2.800" strokeWidth="1.100" />
        <circle cx="15.500" cy="15.500" r="4.500" fill="#f99d1c" stroke="none" />
      </svg>
      <svg viewBox="0 0 20 17" className="ml-[10px] mt-[5px] h-[17px] w-5">
        <rect x=".6" y=".8" width="17.800" height="9.500" fill="none" stroke="#111" strokeWidth="1.200" />
        <rect x="2.500" y="2.500" width="8" height="6" fill="#000" />
        <circle cx="14" cy="11" r="5.600" fill="#0d8a1f" />
        <path d="M14 7.800c2.500 2.500 2 4.700 0 5.200-2-.5-2.500-2.700 0-5.200zM14 10v4.500" fill="none" stroke="#fff" strokeWidth="1" />
      </svg>
      <svg viewBox="0 0 17 17" className="ml-[12px] h-[17px] w-[17px]" fill="none" stroke="#222" strokeWidth="1.200">
        <path d="M1 15.500C1 7.500 8 1 16 1M4.500 16c0-6 5.500-11 11.500-11M8 16c0-4 3.500-7.300 8-7.300M11 16c.3-2.200 2-4 5-4" />
        <circle cx="14.500" cy="14.800" r="1.500" fill="#222" stroke="none" />
      </svg>
      <svg viewBox="0 0 20 16" className="ml-[10px] h-4 w-5" fill="none" stroke="#111" strokeWidth="1.200">
        <path d="M1 5.500h2.500L8 1.500v13l-4.500-4H1zM10.500 5.500c1.300 1.500 1.300 3.500 0 5M13.300 3.500c2.400 2.700 2.400 6.300 0 9M16 1.500c3.500 4 3.500 9 0 13" />
      </svg>
      <span className="ml-[13px] w-[46px] text-[14.5px] tracking-[-0.4px]">ENG</span>
      <div className="flex w-[75px] flex-col items-center text-[14.5px] leading-[23px]">
        <span className="tracking-[-0.6px]">21:36</span>
        <span className="tracking-[-0.1px]">30-04-2024</span>
      </div>
      <div className="relative ml-[22px] mr-[25px] h-[22px] w-[22px]">
        <svg viewBox="0 0 21 20" className="h-5 w-[21px]">
          <path d="M0 0h20.500v15H9l-5 4.500V15H0z" fill="#000" />
          <path d="M3.500 4.500H17M3.500 8H17M3.500 11.500H13" stroke="#fff" strokeWidth="1.500" />
        </svg>
        <div className="absolute left-[10px] top-[11px] flex h-[21px] w-[21px] items-center justify-center rounded-full border border-[#888] bg-[#d4d4d6] text-[13px]">1</div>
      </div>
      <div className="mr-[4px] h-full w-px bg-[#a8b2be]" />
    </div>
  );
}

export default function App() {
  return (
    <div className="h-[1080px] w-[1920px] overflow-hidden whitespace-nowrap bg-white font-['Open_Sans',sans-serif]">
      <TabStrip />
      <Toolbar />
      <AwsHeader />
      <Console />
      <AwsFooter />
      <Taskbar />
    </div>
  );
}
